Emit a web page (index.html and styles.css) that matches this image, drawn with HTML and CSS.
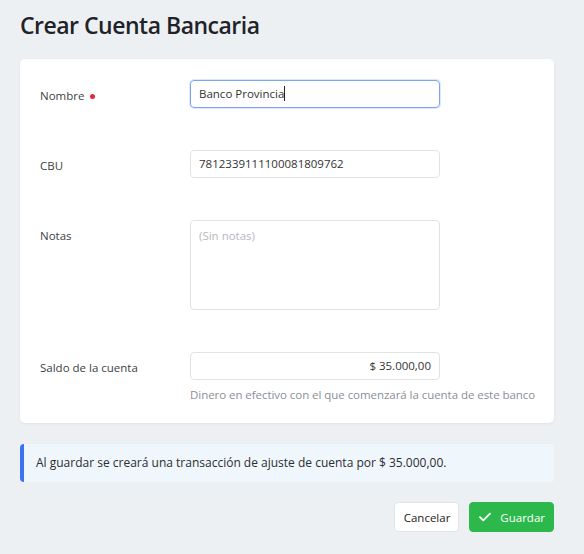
FILE: index.html
```html
<!DOCTYPE html>
<html lang="es">
<head>
<meta charset="utf-8">
<title>Crear Cuenta Bancaria</title>
<link rel="stylesheet" href="styles.css">
</head>
<body>
<div class="page">
  <h1 class="title">Crear Cuenta Bancaria</h1>
  <div class="card">
    <div class="row">
      <div class="label">Nombre <span class="req"></span></div>
      <div class="control">
        <div class="field focused">Banco Provincia<span class="caret"></span></div>
      </div>
    </div>
    <div class="row">
      <div class="label">CBU</div>
      <div class="control">
        <div class="field">7812339111100081809762</div>
      </div>
    </div>
    <div class="row">
      <div class="label">Notas</div>
      <div class="control">
        <div class="field area"><span class="placeholder">(Sin notas)</span></div>
      </div>
    </div>
    <div class="row">
      <div class="label">Saldo de la cuenta</div>
      <div class="control">
        <div class="field right">$ 35.000,00</div>
        <div class="help">Dinero en efectivo con el que comenzará la cuenta de este banco</div>
      </div>
    </div>
  </div>
  <div class="alert">Al guardar se creará una transacción de ajuste de cuenta por $ 35.000,00.</div>
  <div class="actions">
    <button class="btn btn-default">Cancelar</button>
    <button class="btn btn-primary"><svg class="check" viewBox="0 0 12 10" width="12" height="10"><path d="M1 5.2 L4.3 8.4 L11 1.6" fill="none" stroke="#fff" stroke-width="1.8" stroke-linecap="round" stroke-linejoin="round"/></svg>Guardar</button>
  </div>
</div>
</body>
</html>
```
FILE: styles.css
```css
html, body {
  margin: 0;
  padding: 0;
  background: #edf0f3;
}
body {
  font-family: "Open Sans", "Noto Sans", sans-serif;
  color: #303133;
}
.page {
  padding: 8px 30px 0 20px;
}
.title {
  margin: 0;
  font-size: 23px;
  font-weight: 600;
  line-height: 34px;
  color: #1f2329;
  letter-spacing: -0.5px;
}
.card {
  margin-top: 17px;
  background: #fff;
  border-radius: 5px;
  box-shadow: 0 1px 3px rgba(0,0,0,0.06);
  padding: 21px 20px 20px;
  display: flex;
  flex-direction: column;
  gap: 42px;
}
.row {
  display: flex;
  align-items: flex-start;
}
.label {
  width: 150px;
  flex: none;
  font-size: 11.5px;
  line-height: 20px;
  padding-top: 6px;
  color: #3d3f43;
  display: flex;
  align-items: center;
  gap: 6px;
}
.req {
  width: 5px;
  height: 5px;
  border-radius: 50%;
  background: #e5263b;
  display: inline-block;
}
.control {
  width: 250px;
}
.field {
  box-sizing: border-box;
  height: 28px;
  border: 1px solid #dfe2e6;
  border-radius: 4px;
  padding: 0 8px;
  font-size: 11.5px;
  line-height: 26px;
  color: #333;
  white-space: nowrap;
}
.field.focused {
  border-color: #7da4f2;
  box-shadow: 0 0 0 1px rgba(125,164,242,0.25);
}
.caret {
  display: inline-block;
  width: 1px;
  height: 15px;
  background: #222;
  vertical-align: -3px;
}
.field.area {
  height: 90px;
  line-height: 16px;
  padding-top: 7px;
}
.placeholder {
  color: #b5b8bd;
}
.field.right {
  text-align: right;
}
.help {
  margin-top: 6px;
  font-size: 11.5px;
  line-height: 17px;
  color: #8a8f96;
  white-space: nowrap;
  letter-spacing: -0.05px;
}
.alert {
  margin-top: 21px;
  background: #f0f7fc;
  border-left: 4px solid #3b73f0;
  border-radius: 4px;
  padding: 0 12px;
  height: 38px;
  line-height: 38px;
  font-size: 12px;
  color: #2a2d31;
}
.actions {
  margin-top: 20px;
  display: flex;
  justify-content: flex-end;
  gap: 10px;
}
.btn {
  font-family: inherit;
  font-size: 11.5px;
  height: 30px;
  border-radius: 4px;
  cursor: pointer;
  display: inline-flex;
  align-items: center;
}
.btn-default {
  background: #fff;
  border: 1px solid #e1e4e8;
  color: #222;
  padding: 0 8px 0 9px;
}
.btn-primary {
  background: #2db84c;
  border: 1px solid #2db84c;
  color: #fff;
  padding: 0 8px 0 9px;
  gap: 9px;
}
.check {
  display: block;
}
```
